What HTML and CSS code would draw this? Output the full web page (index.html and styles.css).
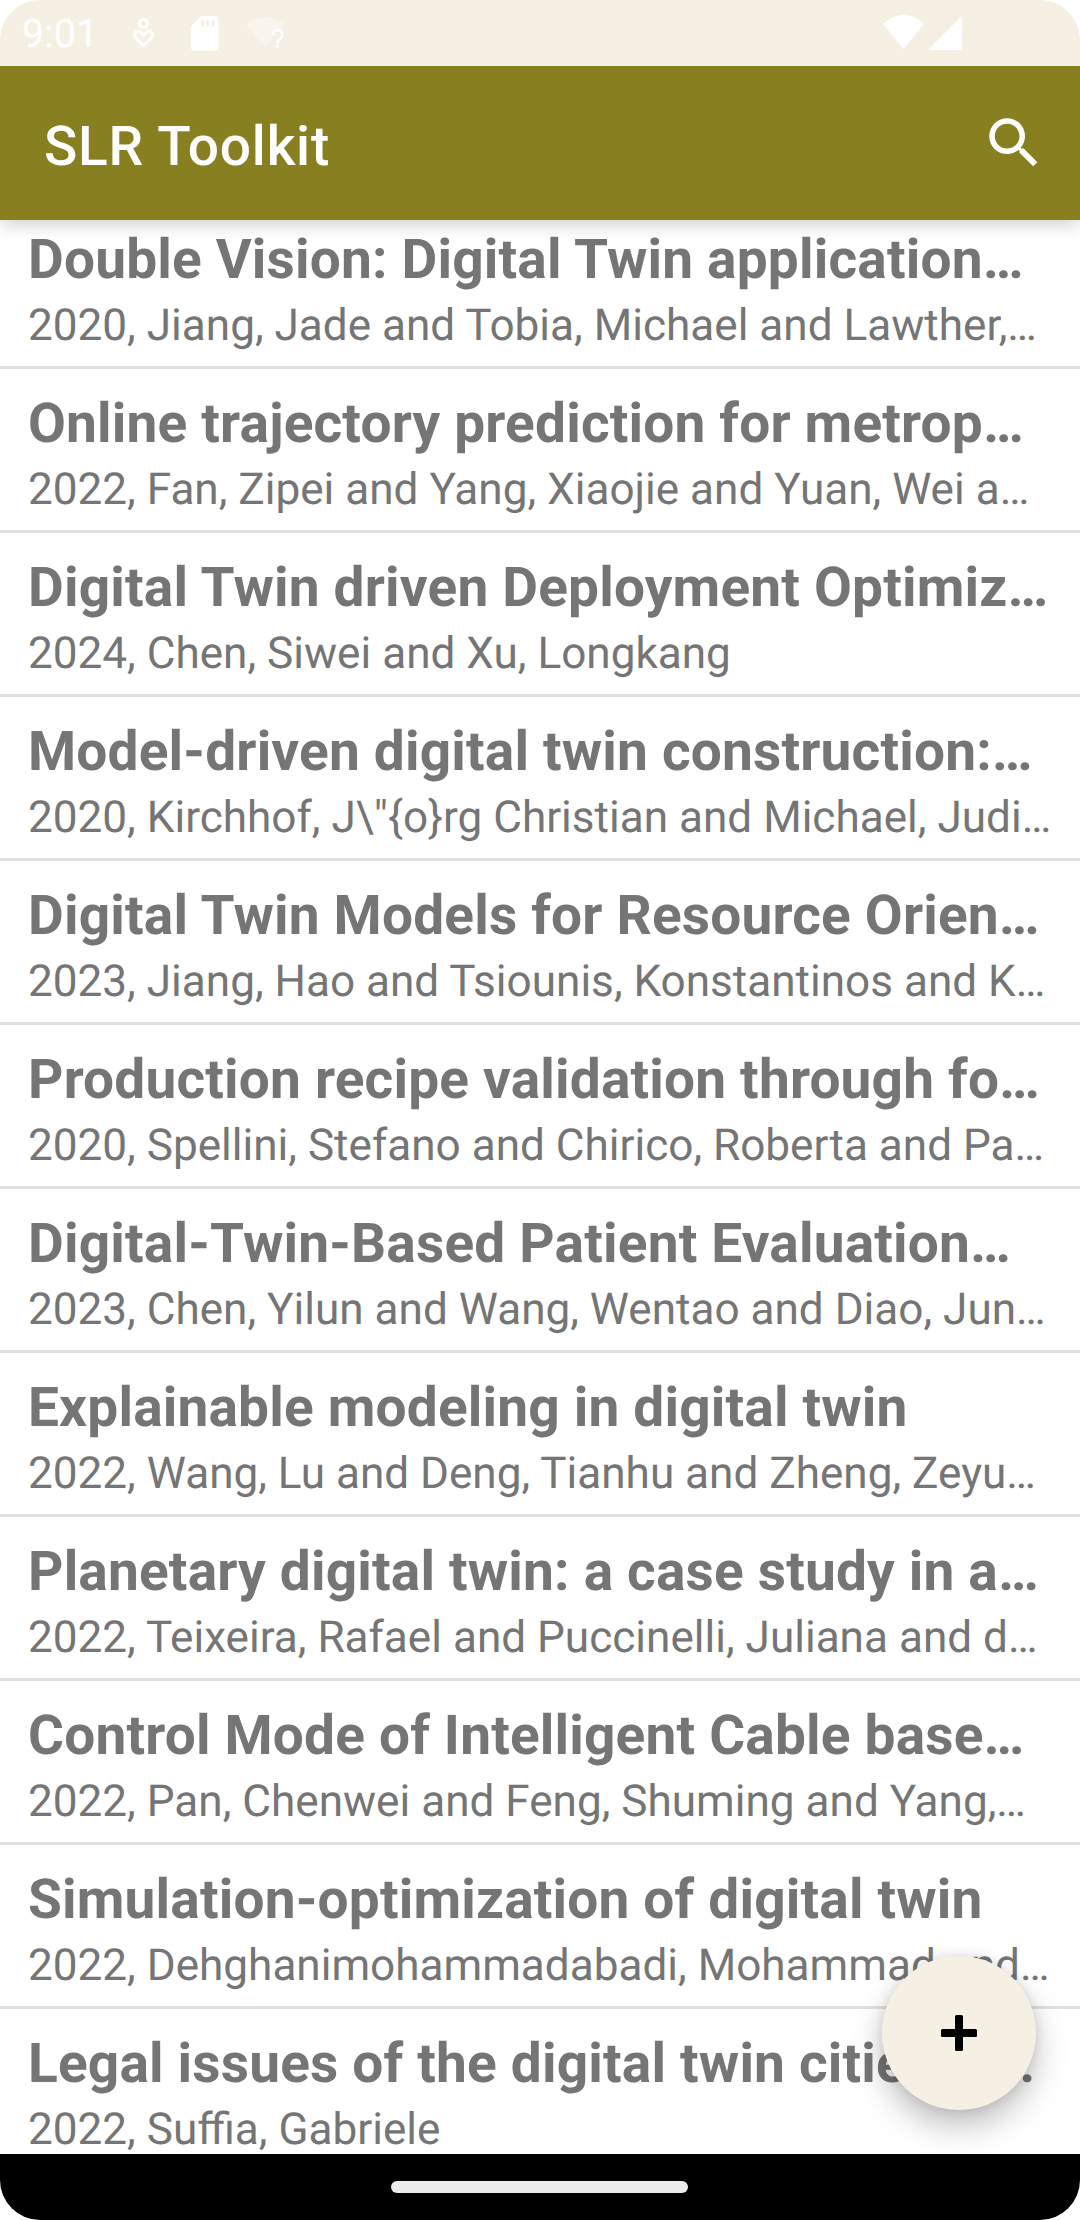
FILE: index.html
```html
<!DOCTYPE html>
<html lang="en">
<head>
<meta charset="utf-8">
<title>SLR Toolkit</title>
<link rel="stylesheet" href="styles.css">
</head>
<body>
<div class="screen">
  <header class="status-bar">
    <span class="clock">9:01</span>
    <svg class="status-care" width="24" height="34" viewBox="0 0 24 34" fill="none" stroke="#fff" stroke-width="3"><circle cx="11.500" cy="6.500" r="4"/><path d="M11.500 28.500L3.700 21.200C0 16.500 5.300 12.500 8.700 15.300L11.500 18L14.300 15.300C17.700 12.500 23 16.500 19.300 21.200Z"/></svg>
    <svg class="status-sd" width="28" height="35" viewBox="0 0 28 35"><path fill="#fff" fill-rule="evenodd" d="M10 0H24.500Q27.500 0 27.500 3V31.500Q27.500 34.500 24.500 34.500H3Q0 34.500 0 31.500V10.500ZM10 4.500V10.500H13V4.500ZM15 4.500V10.500H18V4.500ZM20.500 4.500V10.500H23.500V4.500Z"/></svg>
    <svg class="status-wifi-unknown" width="40" height="34" viewBox="0 0 40 34"><path fill="#fff" opacity=".3" d="M0 7.500Q19.500-7.500 39 7.500L35 13Q26 10 25.500 18V23L19.500 31Z"/><path fill="none" stroke="#fff" stroke-width="2.800" d="M26.800 18.500C26.800 11.500 36.500 11.500 36.500 18C36.500 22 31.500 22 31.500 26.500"/><circle cx="31.500" cy="29.500" r="1.800" fill="#fff"/></svg>
    <svg class="status-wifi" width="41" height="35" viewBox="0 0 41 35"><path fill="#fff" d="M0 9Q8.500 0 20.500 0T41 9L20.500 34Z"/></svg>
    <svg class="status-signal" width="34" height="34" viewBox="0 0 34 34"><path fill="#fff" d="M34 0V34H0Z"/></svg>
  </header>
  <div class="app-bar">
    <h1 class="app-title">SLR Toolkit</h1>
    <svg class="search" width="66" height="66" viewBox="0 0 24 24"><path fill="#fff" d="M15.500 14h-.79l-.28-.27C15.410 12.590 16 11.110 16 9.500 16 5.910 13.090 3 9.500 3S3 5.910 3 9.500 5.910 16 9.500 16c1.610 0 3.090-.59 4.230-1.570l.27.28v.79l5 4.990L20.490 19l-4.990-5zm-6 0C7.010 14 5 11.990 5 9.500S7.010 5 9.500 5 14 7.010 14 9.500 11.990 14 9.500 14z"/></svg>
  </div>
  <main class="viewport">
    <ul class="list">
      <li class="row"><h2 class="title">Double Vision: Digital Twin application…</h2><p class="meta">2020, Jiang, Jade and Tobia, Michael and Lawther,…</p></li>
      <li class="row"><h2 class="title">Online trajectory prediction for metrop…</h2><p class="meta">2022, Fan, Zipei and Yang, Xiaojie and Yuan, Wei a…</p></li>
      <li class="row"><h2 class="title">Digital Twin driven Deployment Optimiz…</h2><p class="meta">2024, Chen, Siwei and Xu, Longkang</p></li>
      <li class="row"><h2 class="title">Model-driven digital twin construction:…</h2><p class="meta">2020, Kirchhof, J\"{o}rg Christian and Michael, Judi…</p></li>
      <li class="row"><h2 class="title">Digital Twin Models for Resource Orien…</h2><p class="meta">2023, Jiang, Hao and Tsiounis, Konstantinos and K…</p></li>
      <li class="row"><h2 class="title">Production recipe validation through fo…</h2><p class="meta">2020, Spellini, Stefano and Chirico, Roberta and Pa…</p></li>
      <li class="row"><h2 class="title">Digital-Twin-Based Patient Evaluation…</h2><p class="meta">2023, Chen, Yilun and Wang, Wentao and Diao, Jun…</p></li>
      <li class="row"><h2 class="title">Explainable modeling in digital twin</h2><p class="meta">2022, Wang, Lu and Deng, Tianhu and Zheng, Zeyu…</p></li>
      <li class="row"><h2 class="title">Planetary digital twin: a case study in a…</h2><p class="meta">2022, Teixeira, Rafael and Puccinelli, Juliana and d…</p></li>
      <li class="row"><h2 class="title">Control Mode of Intelligent Cable base…</h2><p class="meta">2022, Pan, Chenwei and Feng, Shuming and Yang,…</p></li>
      <li class="row"><h2 class="title">Simulation-optimization of digital twin</h2><p class="meta">2022, Dehghanimohammadabadi, Mohammad and…</p></li>
      <li class="row"><h2 class="title">Legal issues of the digital twin cities in…</h2><p class="meta">2022, Suffia, Gabriele</p></li>
    </ul>
    <button class="fab" aria-label="Add"><svg width="36" height="36" viewBox="0 0 36 36"><rect x="14" width="8" height="36" rx="1.500"/><rect y="14" width="36" height="8" rx="1.500"/></svg></button>
  </main>
  <footer class="nav-bar"><div class="handle"></div></footer>
</div>
</body>
</html>
```
FILE: styles.css
```css
* { box-sizing: border-box; margin: 0; padding: 0; }
body { background: #fff; font-family: Roboto, "Liberation Sans", sans-serif; text-rendering: geometricPrecision; }
.screen { display: flex; flex-direction: column; width: 1080px; height: 2220px; border-radius: 40px; overflow: hidden; background: #fff; }

.status-bar { flex: none; display: flex; align-items: flex-start; height: 66px; padding: 0 118px 0 22px; background: #f6f0e4; color: #fff; z-index: 2; }
.clock { width: 110px; padding-top: 11px; font-size: 39.500px; line-height: 46px; }
.status-care { margin-top: 17px; }
.status-sd { margin: 16px 0 0 35px; }
.status-wifi-unknown { margin: 17px 0 0 27px; }
.status-wifi { margin: 15px 4px 0 auto; }
.status-signal { margin-top: 16px; }

.app-bar { flex: none; display: flex; align-items: center; justify-content: space-between; height: 154px; padding: 0 33px 0 44px; background: #888020; box-shadow: 0 4px 18px rgba(0, 0, 0, .2); z-index: 1; }
.app-title { font-size: 55px; font-weight: 500; line-height: 64px; padding-top: 8px; letter-spacing: .8px; color: #fff; }

.viewport { position: relative; flex: 1; min-height: 0; overflow: hidden; }
.list { list-style: none; margin-top: -15px; }
.row { height: 164px; padding: 23px 28px 0; border-bottom: 3px solid #e0e0e0; color: #757575; white-space: nowrap; }
.title { font-size: 55px; font-weight: 700; line-height: 64px; letter-spacing: .18px; }
.meta { margin-top: 7px; font-size: 44.100px; line-height: 52px; }

.fab { position: absolute; right: 44px; bottom: 44px; display: flex; align-items: center; justify-content: center; width: 154px; height: 154px; border: 0; border-radius: 50%; background: #f6f0e4; box-shadow: 0 16px 32px rgba(0, 0, 0, .25), 0 0 12px rgba(0, 0, 0, .1); }

.nav-bar { flex: none; display: flex; justify-content: center; height: 66px; padding: 27px 1px 0 0; background: #000; z-index: 1; }
.handle { width: 297px; height: 12px; border-radius: 6px; background: #ececec; }
```
